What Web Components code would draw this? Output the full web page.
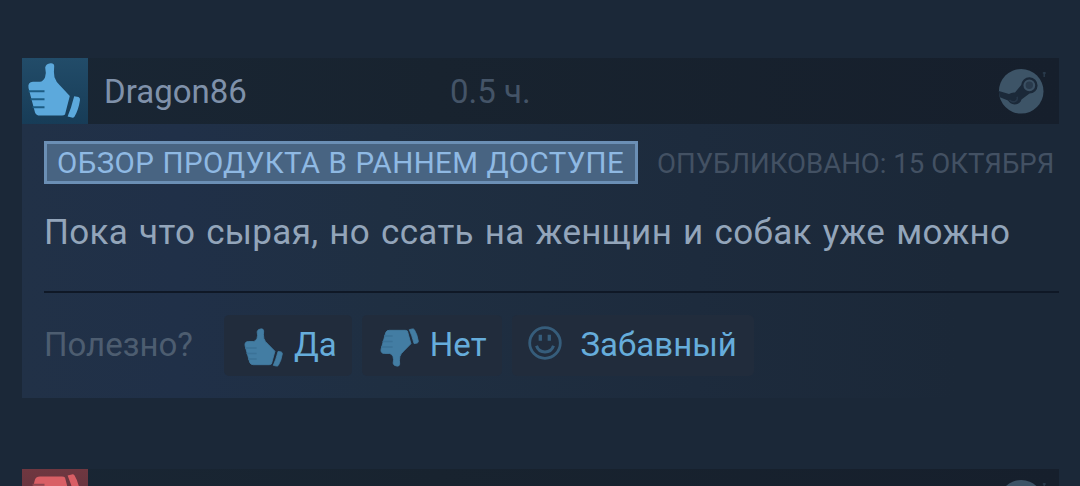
<!DOCTYPE html>
<html lang="ru">
<head>
<meta charset="utf-8">
<title>Обзоры</title>
<style>
    body{
        margin: 0;
        height: 486px;
        overflow: hidden;
        background-color: #1b2838;
        font-family: Roboto, "Noto Sans", sans-serif;
    }
</style>
</head>
<body>
<review-list>
    <review-card user="Dragon86" hours="0.5 ч." vote="up">
        <early-badge slot="badge">ОБЗОР ПРОДУКТА В РАННЕМ ДОСТУПЕ</early-badge>
        <span slot="date">ОПУБЛИКОВАНО: 15 ОКТЯБРЯ</span>
        <span slot="text">Пока что сырая, но ссать на женщин и собак уже можно</span>
        <vote-bar slot="votes">
            <vote-button icon="up">Да</vote-button>
            <vote-button icon="down">Нет</vote-button>
            <vote-button icon="smile">Забавный</vote-button>
        </vote-bar>
    </review-card>
    <review-card vote="down"></review-card>
</review-list>

<script>
const thumb=`
    <path d="M28.5 5.3Q32 5 32.2 8Q31.5 14 32.5 19.3Q34 24 38 27.5L47.8 38L43 56.5Q42 57.6 40 57.6H18Q14 57.6 13 54.5L6.5 30Q5.5 24 11 23.8H18Q21 23.6 23 19.5Q24.5 15 23.2 9.5Q24 5.6 28.5 5.3Z"/>
    <path d="M52.2 38.2L56.5 39Q58.3 39.8 58 42Q56.5 52 52.6 58.4Q51.6 60 49.8 59.6L45.6 58.6L49 49.5Q50.5 44 52.2 38.2Z"/>
    <path class="lines" d="M6.5 33.2H22.5M8.5 41.3H22.5M10.5 49.3H22.5"/>`

const icons={
    up: `<svg viewBox="5 4 54 57" preserveAspectRatio="none">${thumb}</svg>`,
    down: `<svg viewBox="5 4 54 57" preserveAspectRatio="none"><g transform="matrix(1 0 0 -1 0 65)">${thumb}</g></svg>`,
    smile: `<svg viewBox="0 0 34 34">
        <circle cx="17" cy="17" r="15.3" fill="none" stroke="currentColor" stroke-width="2.8"/>
        <path d="M12.3 8.8v6M21.3 8.8v6" fill="none" stroke="currentColor" stroke-width="3.3"/>
        <path d="M8.5 19.8Q10.5 26 17 26T25.5 19.8" fill="none" stroke="currentColor" stroke-width="3"/>
    </svg>`
}

class reviewList extends HTMLElement{
    constructor(){
        super()
        this.attachShadow({mode: "open"})
        this.shadowRoot.innerHTML=
        `<style>
        :host{
            display: flex;
            flex-direction: column;
            gap: 71px;
            box-sizing: border-box;
            height: 486px;
            overflow: hidden;
            padding: 58px 21px 0 22px;
        }
        </style>
        <slot></slot>`
    }
}

// значок голосования
class thumbIcon extends HTMLElement{
    connectedCallback(){
        this.attachShadow({mode: "open"})
        this.shadowRoot.innerHTML=
        `<style>
        :host{
            display: block;
            flex-shrink: 0;
        }
        svg{
            display: block;
            width: 100%;
            height: 100%;
            overflow: visible;
            fill: currentColor;
            stroke: currentColor;
            stroke-width: var(--bold, 0);
        }
        .lines{
            fill: none;
            stroke: var(--lines, #1d5c83);
            stroke-width: 1.9;
        }
        </style>
        ${icons[this.getAttribute("name")]}`
    }
}

class steamLogo extends HTMLElement{
    constructor(){
        super()
        this.attachShadow({mode: "open"})
        this.shadowRoot.innerHTML=
        `<style>
        :host{
            display: block;
            width: 48px;
            height: 45px;
        }
        svg{
            display: block;
        }
        </style>
        <svg width="48" height="45" viewBox="0 0 48 45">
            <clipPath id="disc"><circle cx="23.2" cy="22.3" r="22.3"/></clipPath>
            <circle cx="23.2" cy="22.3" r="22.3" fill="#3d5467"/>
            <g clip-path="url(#disc)">
                <path d="M-1 21.5L11 25Q14 23 17 23.5L23.2 16A8.2 8.2 0 1 1 31.5 24.6L23.5 30.5Q22 35.5 16.5 35.5Q12 35 10 31.5L-1 27Z" fill="#1b2939"/>
                <path d="M11.5 31Q14 33.8 17.5 32.4Q20.2 30.5 19 27.8" fill="none" stroke="#263749" stroke-width="1.5"/>
            </g>
            <circle cx="31.3" cy="16.3" r="4.8" fill="#293a4c" stroke="#3b5063" stroke-width="2.2"/>
            <path d="M46.2 3v5M44.8 4h3" stroke="#2a3b4c" stroke-width="1.4"/>
        </svg>`
    }
}

class earlyBadge extends HTMLElement{
    constructor(){
        super()
        this.attachShadow({mode: "open"})
        this.shadowRoot.innerHTML=
        `<style>
        :host{
            display: block;
            box-sizing: border-box;
            flex-shrink: 0;
            width: 594px;
            height: 43px;
            padding-left: 10px;
            border: 3px solid #6b8fb5;
            background-color: #486482;
            color: #8fb9e3;
            font-size: 29.5px;
            letter-spacing: 0.4px;
            word-spacing: 0.4px;
            line-height: 38px;
            white-space: nowrap;
        }
        </style>
        <slot></slot>`
    }
}

class voteButton extends HTMLElement{
    connectedCallback(){
        let icon=this.getAttribute("icon")
        this.attachShadow({mode: "open"})
        this.shadowRoot.innerHTML=
        `<style>
        :host{
            display: flex;
            box-sizing: border-box;
            height: 61px;
            padding: 0 15px 0 20px;
            border-radius: 5px;
            background-color: #212c3c;
            color: #66addb;
            font-size: 33px;
            line-height: 59px;
            white-space: nowrap;
        }
        :host([icon="down"]){
            padding-left: 18px;
        }
        :host([icon="smile"]){
            padding: 0 17px 0 16px;
        }
        thumb-icon{
            width: 39px;
            height: 39px;
            margin: 13px 11px 0 0;
            color: #437da3;
            --lines: #3b7297;
            --bold: 1.2;
        }
        :host([icon="smile"]) thumb-icon{
            width: 34px;
            height: 34px;
            margin: 11px 19px 0 0;
            color: #365d7b;
        }
        </style>
        <thumb-icon name="${icon}"></thumb-icon>
        <slot></slot>`
    }
}

class voteBar extends HTMLElement{
    constructor(){
        super()
        this.attachShadow({mode: "open"})
        this.shadowRoot.innerHTML=
        `<style>
        :host{
            display: flex;
            gap: 10px;
        }
        .label{
            width: 170px;
            color: #4d5d70;
            font-size: 33px;
            line-height: 59px;
        }
        </style>
        <div class="label">Полезно?</div>
        <slot></slot>`
    }
}

class reviewCard extends HTMLElement{
    connectedCallback(){
        let user=this.getAttribute("user") || ""
        let hours=this.getAttribute("hours") || ""
        let vote=this.getAttribute("vote")
        this.attachShadow({mode: "open"})
        this.shadowRoot.innerHTML=
        `<style>
        :host{
            display: block;
            box-sizing: border-box;
            height: 340px;
            flex-shrink: 0;
            background: linear-gradient(90deg, #213147 0%, #203048 15%, #1f2f42 35%, #1d2b3d 65%, #1b2838 90%);
        }
        :host([vote="down"]){
            height: 17px;
            overflow: hidden;
        }
        header{
            display: flex;
            align-items: center;
            height: 66px;
            padding-right: 13px;
            background: linear-gradient(90deg, #192634, #18232f 40%, #161f2c);
            font-size: 33px;
        }
        .vote{
            width: 66px;
            height: 66px;
            box-sizing: border-box;
            padding: 4px 7px 5px 5px;
            background: linear-gradient(#224c69, #173c57);
            color: #5ca9dc;
        }
        .vote.down{
            background: linear-gradient(#6f3740, #57303c);
            color: #d95f65;
            --lines: #8f464f;
        }
        .vote thumb-icon{
            height: 57px;
        }
        .user{
            width: 346px;
            padding-left: 16px;
            color: #7f91aa;
            box-sizing: border-box;
        }
        .hours{
            flex: 1;
            padding-left: 16px;
            color: #445467;
        }
        .meta{
            display: flex;
            padding: 17px 0 0 22px;
        }
        .date{
            padding-left: 19px;
            color: #435163;
            font-size: 27.6px;
            line-height: 45px;
            height: 43px;
            white-space: nowrap;
        }
        .text{
            margin-left: 22px;
            height: 109px;
            border-bottom: 2px solid #0f1826;
            box-sizing: border-box;
            padding-top: 28px;
            color: #93a5ba;
            font-size: 35px;
            letter-spacing: 0.33px;
            word-spacing: 1.9px;
            line-height: 42px;
            white-space: nowrap;
        }
        .votes{
            padding: 22px 0 0 22px;
        }
        </style>
        <header>
            <div class="vote ${vote}"><thumb-icon name="${vote}"></thumb-icon></div>
            <div class="user">${user}</div>
            <div class="hours">${hours}</div>
            <steam-logo></steam-logo>
        </header>
        ${user ? `<div class="meta"><slot name="badge"></slot><div class="date"><slot name="date"></slot></div></div>
        <div class="text"><slot name="text"></slot></div>
        <div class="votes"><slot name="votes"></slot></div>` : ""}`
    }
}

customElements.define("thumb-icon",thumbIcon)
customElements.define("steam-logo",steamLogo)
customElements.define("early-badge",earlyBadge)
customElements.define("vote-button",voteButton)
customElements.define("vote-bar",voteBar)
customElements.define("review-card",reviewCard)
customElements.define("review-list",reviewList)
</script>
</body>
</html>
